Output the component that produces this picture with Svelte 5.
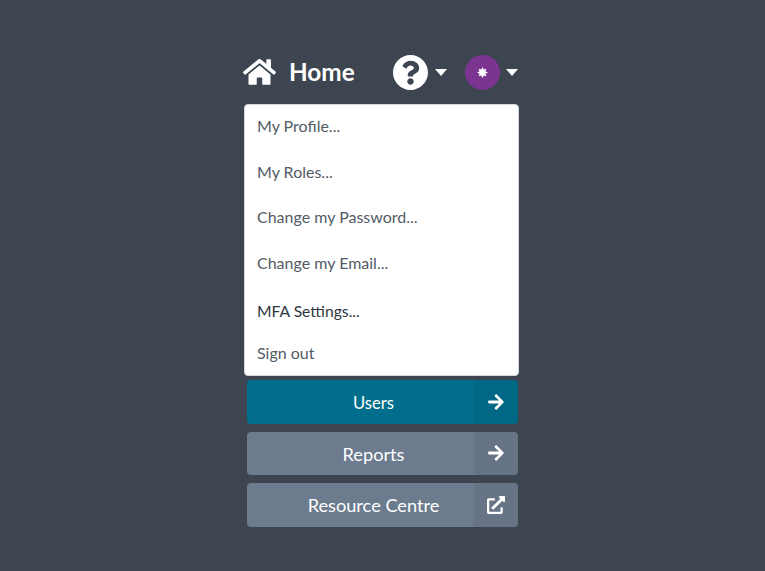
<script>
  const items = [
    { label: 'My Profile...', cls: '' },
    { label: 'My Roles...', cls: '' },
    { label: 'Change my Password...', cls: '' },
    { label: 'Change my Email...', cls: '' },
    { label: 'MFA Settings...', cls: 'dark tall' },
    { label: 'Sign out', cls: 'short' }
  ];
  const arrow = 'M190.5 66.9l22.2-22.2c9.4-9.4 24.6-9.4 33.9 0L441 239c9.4 9.4 9.4 24.6 0 33.9L246.6 467.3c-9.4 9.4-24.6 9.4-33.9 0l-22.2-22.2c-9.5-9.5-9.3-25 .4-34.3L311.4 296H24c-13.3 0-24-10.7-24-24v-32c0-13.3 10.7-24 24-24h287.4L190.9 101.2c-9.8-9.3-10-24.8-.4-34.3z';
  const ext = 'M432,320H400a16,16,0,0,0-16,16V448H64V128H208a16,16,0,0,0,16-16V80a16,16,0,0,0-16-16H48A48,48,0,0,0,0,112V464a48,48,0,0,0,48,48H400a48,48,0,0,0,48-48V336A16,16,0,0,0,432,320ZM488,0h-128c-21.37,0-32.05,25.91-17,41l35.73,35.73L135,320.37a24,24,0,0,0,0,34L157.67,377a24,24,0,0,0,34,0L435.28,133.32,471,169c15,15,41,4.5,41-17V24A24,24,0,0,0,488,0Z';
  const buttons = [
    { label: 'Users', cls: 'teal', vb: '0 0 448 512', d: arrow, w: 18 },
    { label: 'Reports', cls: 'slate', vb: '0 0 448 512', d: arrow, w: 18 },
    { label: 'Resource Centre', cls: 'slate', vb: '0 0 512 512', d: ext, w: 18 }
  ];
</script>

<div class="page">
  <div class="col">
    <header class="top">
      <svg class="home" viewBox="0 0 576 512" aria-hidden="true"><path fill="currentColor" d="M280.37 148.26L96 300.11V464a16 16 0 0 0 16 16l112.06-.29a16 16 0 0 0 15.92-16V368a16 16 0 0 1 16-16h64a16 16 0 0 1 16 16v95.64a16 16 0 0 0 16 16.05L464 480a16 16 0 0 0 16-16V300L295.67 148.26a12.19 12.19 0 0 0-15.3 0zM571.6 251.47L488 182.56V44.05a12 12 0 0 0-12-12h-56a12 12 0 0 0-12 12v72.61L318.47 43a48 48 0 0 0-61 0L4.34 251.47a12 12 0 0 0-1.6 16.9l25.5 31A12 12 0 0 0 45.15 301l235.22-193.74a12.19 12.19 0 0 1 15.3 0L530.9 301a12 12 0 0 0 16.9-1.6l25.5-31a12 12 0 0 0-1.7-16.93z"/></svg>
      <span class="title">Home</span>
      <svg class="help" viewBox="8 8 496 496" aria-hidden="true"><path fill="currentColor" d="M504 256c0 136.997-111.043 248-248 248S8 392.997 8 256C8 119.083 119.043 8 256 8s248 111.083 248 248zM262.655 90c-54.497 0-89.255 22.957-116.549 63.758-3.536 5.286-2.353 12.415 2.715 16.258l34.699 26.31c5.205 3.947 12.621 3.008 16.665-2.122 17.864-22.658 30.113-35.797 57.303-35.797 20.429 0 45.698 13.148 45.698 32.958 0 14.976-12.363 22.667-32.534 33.976C247.128 238.528 216 254.941 216 296v4c0 6.627 5.373 12 12 12h56c6.627 0 12-5.373 12-12v-1.333c0-28.462 83.186-29.647 83.186-106.667 0-58.002-60.165-102-116.531-102zM256 338c-25.365 0-46 20.635-46 46 0 25.364 20.635 46 46 46s46-20.636 46-46c0-25.365-20.635-46-46-46z"/></svg>
      <span class="caret first"></span>
      <span class="avatar">
        <svg viewBox="-6 -6 12 12" aria-hidden="true"><path fill="#fff" d="M0-6 1.4-3.2 4.2-4.2 3.2-1.4 6 0 3.2 1.4 4.2 4.2 1.4 3.2 0 6-1.4 3.2-4.2 4.2-3.2 1.4-6 0-3.2-1.4-4.2-4.2-1.4-3.2Z"/></svg>
      </span>
      <span class="caret"></span>
    </header>

    <nav class="menu">
      {#each items as item}
        <div class="item {item.cls}">{item.label}</div>
      {/each}
    </nav>

    <div class="buttons">
      {#each buttons as b}
        <div class="btn {b.cls}">
          <span class="label">{b.label}</span>
          <span class="side">
            <svg viewBox={b.vb} width={b.w} height={b.w} aria-hidden="true"><path fill="currentColor" d={b.d}/></svg>
          </span>
        </div>
      {/each}
    </div>
  </div>
</div>

<style>
  :global(body) {
    margin: 0;
    background: #3c4550;
  }
  .page {
    height: 571px;
    background: #3c4550;
    overflow: hidden;
    font-family: Lato, "Liberation Sans", sans-serif;
  }
  .col {
    width: 275px;
    margin-left: 244px;
    padding-top: 50px;
  }
  .top {
    display: flex;
    align-items: center;
    height: 44px;
    margin-left: -1px;
    color: #fff;
  }
  .home {
    width: 33px;
    height: 30px;
    flex: none;
  }
  .title {
    margin-left: 13px;
    font-size: 24.3px;
    font-weight: 700;
    line-height: 44px;
    width: 104px;
    flex: none;
  }
  .help {
    width: 35px;
    height: 35px;
    flex: none;
  }
  .caret {
    width: 0;
    height: 0;
    margin-left: 6px;
    border-left: 6.5px solid transparent;
    border-right: 6.5px solid transparent;
    border-top: 7px solid #fff;
    flex: none;
  }
  .caret.first {
    margin-left: 7px;
    margin-right: 18px;
  }
  .avatar {
    width: 35px;
    height: 35px;
    border-radius: 50%;
    background: #7b3591;
    display: flex;
    align-items: center;
    justify-content: center;
    flex: none;
  }
  .avatar svg {
    width: 11px;
    height: 11px;
  }
  .menu {
    margin-top: 9.5px;
    background: #fff;
    border: 1px solid #d5d8dc;
    border-radius: 4px;
    box-sizing: border-box;
    height: 272.5px;
    padding-top: 0.5px;
  }
  .item {
    height: 45.5px;
    line-height: 41px;
    padding-left: 12px;
    font-size: 16px;
    color: #535b66;
  }
  .item.dark {
    color: #2e3540;
    font-size: 15.7px;
  }
  .item.tall {
    height: 47px;
    line-height: 49px;
  }
  .item.short {
    height: 40px;
    line-height: 38px;
  }
  .buttons {
    margin: 4px 1px 0 3px;
    display: flex;
    flex-direction: column;
    gap: 8px;
  }
  .btn {
    height: 43.6px;
    display: flex;
    border-radius: 4px;
    overflow: hidden;
    color: #fff;
    font-size: 18.2px;
  }
  .btn.teal {
    background: #006e8c;
    font-size: 16.6px;
  }
  .btn.slate {
    background: #6c7b8e;
  }
  .label {
    width: 227px;
    box-sizing: border-box;
    padding-left: 26px;
    line-height: 45.6px;
    text-align: center;
    flex: none;
  }
  .teal .label {
    line-height: 46.6px;
  }
  .side {
    flex: 1;
    display: flex;
    align-items: center;
    justify-content: center;
    background: rgba(0, 0, 0, 0.05);
  }
</style>
